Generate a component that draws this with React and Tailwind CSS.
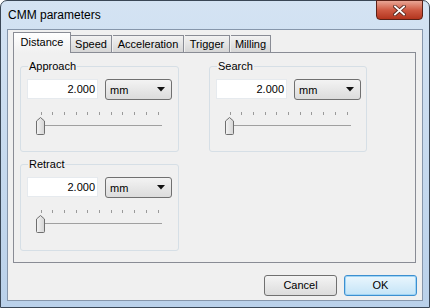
import React from "react";

function Slider() {
    const ticks = [];
    for (let i = 0; i < 11; i++) ticks.push(10.5 + i * 11.7);
    return (
        <svg width="150" height="26" viewBox="0 0 150 26" className="block">
            <defs>
                <linearGradient id="thumb" x1="0" y1="0" x2="1" y2="0">
                    <stop offset="0" stopColor="#f4f4f4" />
                    <stop offset="1" stopColor="#d4d4d4" />
                </linearGradient>
            </defs>
            {ticks.map((x, i) => (
                <line key={i} x1={Math.round(x) + 0.5} y1="2" x2={Math.round(x) + 0.5} y2="5" stroke="#9a9a9a" strokeWidth="1" />
            ))}
            <line x1="13" y1="15.5" x2="132" y2="15.5" stroke="#a0a0a0" strokeWidth="1" />
            <path d="M6.5 23.5 Q6.5 24.5 7.5 24.5 H13.5 Q14.5 24.5 14.5 23.5 V11 L10.5 7.5 L6.5 11 Z" fill="url(#thumb)" stroke="#6f6f6f" strokeWidth="1" />
        </svg>
    );
}

function UnitInput({ value }) {
    return (
        <div className="flex gap-[7px]">
            <div className="w-[71px] h-[20px] bg-white border border-[#e6eaee] flex items-center justify-end pr-[2px] text-[11px]">
                {value}
            </div>
            <div className="w-[67px] h-[21px] rounded-[3px] border border-[#707070] bg-gradient-to-b from-[#f3f3f3] to-[#dcdcdc] flex items-center justify-between pl-[4px] pr-[6px] text-[11px]">
                <span className="mt-[1px]">mm</span>
                <svg width="8" height="5" viewBox="0 0 8 5"><path d="M0 0 H8 L4 4.5 Z" fill="#111" /></svg>
            </div>
        </div>
    );
}

function GroupBox({ title, width, height }) {
    return (
        <div className={`relative rounded-[3px] border border-[#d6dfe6] ${width} ${height}`}>
            <span className="absolute left-[7px] top-[-8px] bg-[#f0f0f0] px-[1px] text-[11px] leading-[14px]">{title}</span>
            <div className="pl-[6px] pt-[12px]">
                <UnitInput value="2.000" />
                <div className="mt-[10px] ml-[3px]">
                    <Slider />
                </div>
            </div>
        </div>
    );
}

export default function App() {
    const tabs = [
        { name: "Speed", w: "w-[41px]" },
        { name: "Acceleration", w: "w-[71px]" },
        { name: "Trigger", w: "w-[45px]" },
        { name: "Milling", w: "w-[40px]" },
    ];

    return (
        <div className="w-[430px] h-[308px] bg-white font-['Liberation_Sans',Arial,sans-serif] text-black">
            <div className="relative flex h-full flex-col rounded-t-[7px] border border-[#3a4756] bg-gradient-to-b from-[#d4e3f3] to-[#bad1ea] px-[6px] pb-[6px]">
                {/* title bar */}
                <div className="h-[28px] flex items-center pl-[1px] text-[12px]">CMM parameters</div>
                <div className="absolute right-[6px] top-[-1px] w-[47px] h-[20px] rounded-b-[4px] border border-[#5b2117] bg-gradient-to-b from-[#e8a595] via-[#cf5a43] to-[#b3341d] flex items-center justify-center">
                    <svg width="13" height="11" viewBox="0 0 13 11">
                        <path d="M2 1.5 L11 9.5 M11 1.5 L2 9.5" stroke="#5a2a22" strokeWidth="3.6" strokeLinecap="square" />
                        <path d="M2 1.5 L11 9.5 M11 1.5 L2 9.5" stroke="#ffffff" strokeWidth="1.8" strokeLinecap="square" />
                    </svg>
                </div>

                {/* client area */}
                <div className="flex flex-1 flex-col border border-[#8696ab] bg-[#f0f0f0]">
                    {/* tabs */}
                    <div className="flex items-end ml-[5px] mt-[2px] h-[20px]">
                        <div className="relative z-10 -mb-px h-[21px] w-[58px] border border-b-0 border-[#898c95] bg-gradient-to-b from-[#ffffff] to-[#f0f0f0] flex items-center justify-center text-[11px] pb-[1px]">
                            Distance
                        </div>
                        {tabs.map((t, i) => (
                            <div
                                key={t.name}
                                className={`h-[17px] ${t.w} ${i === 0 ? "" : "ml-[1px]"} border border-b-0 border-l-0 ${i === 0 ? "" : "border-l"} border-[#898c95] bg-gradient-to-b from-[#f2f2f2] to-[#d6d6d6] flex items-center justify-center text-[11px]`}
                            >
                                {t.name}
                            </div>
                        ))}
                    </div>

                    {/* panel */}
                    <div className="ml-[5px] mr-[6px] h-[211px] border border-[#898c95] bg-[#f0f0f0]">
                        <div className="flex gap-[30px] pl-[6px] pt-[13px]">
                            <div className="flex flex-col gap-[12px]">
                                <GroupBox title="Approach" width="w-[159px]" height="h-[86px]" />
                                <GroupBox title="Retract" width="w-[159px]" height="h-[87px]" />
                            </div>
                            <GroupBox title="Search" width="w-[158px]" height="h-[86px]" />
                        </div>
                    </div>

                    {/* buttons */}
                    <div className="flex justify-end gap-[7px] mt-[12px] mr-[5px]">
                        <button className="w-[73px] h-[21px] rounded-[3px] border border-[#707070] bg-gradient-to-b from-[#f4f4f4] to-[#dcdcdc] text-[11px]">
                            Cancel
                        </button>
                        <button className="w-[73px] h-[21px] rounded-[3px] border border-[#3c8fd0] bg-gradient-to-b from-[#eaf6fd] to-[#c4e4f7] text-[11px] shadow-[inset_0_0_0_1px_#9fd4f5]">
                            OK
                        </button>
                    </div>
                </div>
            </div>
        </div>
    );
}
